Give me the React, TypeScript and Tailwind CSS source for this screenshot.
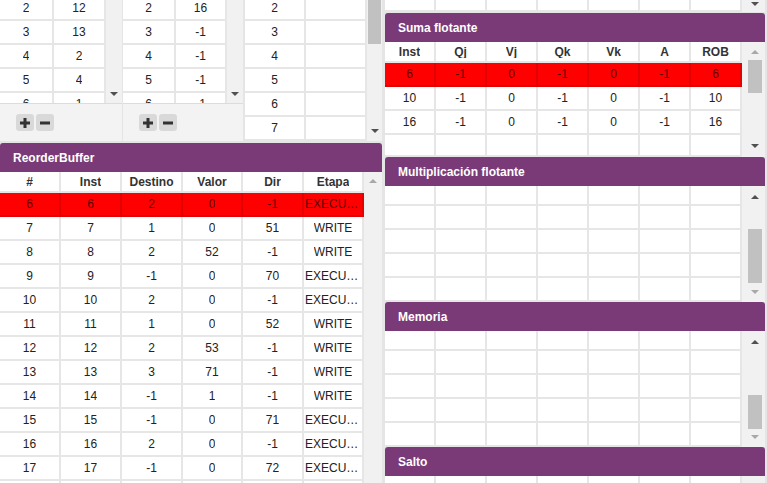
import React from "react";

type Cell = string | number;

const RW = ["w-[61px]", "w-[61px]", "w-[61px]", "w-[60px]", "w-[61px]", "w-[60px]"];
const CW = ["w-[51px]", "w-[51px]", "w-[51px]", "w-[51px]", "w-[51px]", "w-[51px]", "w-[51px]"];

function Arrow({ up, dim }: { up?: boolean; dim?: boolean }) {
  if (up)
    return (
      <div
        className={`h-0 w-0 shrink-0 border-x-[4px] border-b-[4px] border-x-transparent ${
          dim ? "border-b-[#a8a8a8]" : "border-b-[#505050]"
        }`}
      />
    );
  return (
    <div
      className={`h-0 w-0 shrink-0 border-x-[4px] border-t-[4px] border-x-transparent ${
        dim ? "border-t-[#a8a8a8]" : "border-t-[#505050]"
      }`}
    />
  );
}

function TRow({
  cells,
  widths,
  h,
  head,
  hot,
}: {
  cells: Cell[];
  widths: string[];
  h: string;
  head?: boolean;
  hot?: boolean;
}) {
  return (
    <div className={`flex shrink-0 ${h}`}>
      {widths.map((w, i) => (
        <div
          key={i}
          className={`${w} flex shrink-0 items-center justify-center overflow-hidden border-r-2 border-b-2 px-[1px] ${
            hot ? "border-[#e20000] bg-[#ff0000] text-[#5a0000]" : "border-[#e6e6e6] bg-white text-[#222]"
          } ${head ? "font-bold text-[#333]" : ""}`}
        >
          <span className="truncate">{cells[i] ?? ""}</span>
        </div>
      ))}
    </div>
  );
}

function Header({ title }: { title: string }) {
  return (
    <div className="flex h-[29px] shrink-0 items-center rounded-t-[3px] bg-[#7a3a78] pl-[13px] text-[12px] font-bold text-white">
      {title}
    </div>
  );
}

function PlusMinus() {
  return (
    <div className="flex h-[38px] shrink-0 gap-[2px] border-t border-[#dcdcdc] bg-[#f3f3f3] pl-[16px] pt-[10px]">
      <div className="flex h-[17px] w-[18px] items-center justify-center rounded-[3px] bg-[#d9d9d9]">
        <svg width="10" height="10" viewBox="0 0 10 10">
          <rect x="0" y="3.5" width="10" height="3" fill="#333" />
          <rect x="3.5" y="0" width="3" height="10" fill="#333" />
        </svg>
      </div>
      <div className="flex h-[17px] w-[18px] items-center justify-center rounded-[3px] bg-[#d9d9d9]">
        <svg width="10" height="10" viewBox="0 0 10 10">
          <rect x="0" y="3.5" width="10" height="3" fill="#333" />
        </svg>
      </div>
    </div>
  );
}

function RegPanel({ rows, widths, total }: { rows: Cell[][]; widths: string[]; total: string }) {
  return (
    <div className={`flex ${total} shrink-0 flex-col bg-[#f3f3f3]`}>
      <div className="flex h-[103px] shrink-0 overflow-hidden">
        <div className="-mt-[3px] flex flex-col">
          {rows.map((r, i) => (
            <TRow key={i} cells={r} widths={widths} h="h-[24px]" />
          ))}
        </div>
        <div className="flex w-[16px] flex-col items-center justify-end bg-[#f1f1f1] pb-[7px]">
          <Arrow />
        </div>
      </div>
      <PlusMinus />
    </div>
  );
}

const reorder: Cell[][] = [
  [6, 6, 2, 0, -1, "EXECUTE"],
  [7, 7, 1, 0, 51, "WRITE"],
  [8, 8, 2, 52, -1, "WRITE"],
  [9, 9, -1, 0, 70, "EXECUTE"],
  [10, 10, 2, 0, -1, "EXECUTE"],
  [11, 11, 1, 0, 52, "WRITE"],
  [12, 12, 2, 53, -1, "WRITE"],
  [13, 13, 3, 71, -1, "WRITE"],
  [14, 14, -1, 1, -1, "WRITE"],
  [15, 15, -1, 0, 71, "EXECUTE"],
  [16, 16, 2, 0, -1, "EXECUTE"],
  [17, 17, -1, 0, 72, "EXECUTE"],
  ["", "", "", "", "", ""],
];

const suma: Cell[][] = [
  [6, -1, 0, -1, 0, -1, 6],
  [10, -1, 0, -1, 0, -1, 10],
  [16, -1, 0, -1, 0, -1, 16],
];

function EmptyGrid() {
  return (
    <div className="flex flex-col">
      <TRow cells={[]} widths={CW} h="h-[20px]" />
      <TRow cells={[]} widths={CW} h="h-[24px]" />
      <TRow cells={[]} widths={CW} h="h-[24px]" />
      <TRow cells={[]} widths={CW} h="h-[24px]" />
      <TRow cells={[]} widths={CW} h="h-[24px]" />
    </div>
  );
}

export default function App() {
  return (
    <div className="flex h-[483px] w-[767px] overflow-hidden bg-[#e5e5e5] font-['Liberation_Sans',Arial,sans-serif] text-[12px] leading-none">
      {/* left column */}
      <div className="flex w-[382px] shrink-0 flex-col">
        <div className="flex h-[141px] shrink-0 overflow-hidden">
          <RegPanel
            total="w-[122px]"
            widths={["w-[54px]", "w-[52px]"]}
            rows={[[2, 12], [3, 13], [4, 2], [5, 4], [6, 1]]}
          />
          <div className="ml-[1px]">
            <RegPanel
              total="w-[120px]"
              widths={["w-[53px]", "w-[51px]"]}
              rows={[[2, 16], [3, -1], [4, -1], [5, -1], [6, -1]]}
            />
          </div>
          <div className="ml-[2px] flex w-[137px] shrink-0 overflow-hidden">
            <div className="-mt-[3px] flex flex-col">
              {[2, 3, 4, 5, 6, 7].map((n) => (
                <TRow key={n} cells={[n, ""]} widths={["w-[61px]", "w-[61px]"]} h="h-[24px]" />
              ))}
            </div>
            <div className="flex w-[15px] flex-col items-center bg-[#f1f1f1] pb-[8px]">
              <div className="h-[44px] w-[13px] bg-[#c1c1c1]" />
              <div className="flex-1" />
              <Arrow />
            </div>
          </div>
        </div>

        <div className="mt-[2px] flex min-h-0 flex-1 flex-col">
          <Header title="ReorderBuffer" />
          <div className="flex min-h-0 flex-1 overflow-hidden">
            <div className="flex flex-col">
              <TRow cells={["#", "Inst", "Destino", "Valor", "Dir", "Etapa"]} widths={RW} h="h-[21px]" head />
              {reorder.map((r, i) => (
                <TRow key={i} cells={r} widths={RW} h="h-[24px]" hot={i === 0} />
              ))}
            </div>
            <div className="flex w-[18px] flex-col items-center bg-[#f1f1f1] pt-[7px]">
              <Arrow up dim />
            </div>
          </div>
        </div>
      </div>

      {/* right column */}
      <div className="ml-[3px] flex w-[380px] shrink-0 flex-col">
        <div className="flex h-[12px] shrink-0 overflow-hidden">
          <TRow cells={[]} widths={CW} h="h-[12px]" />
          <div className="flex w-[23px] flex-col items-center bg-[#f1f1f1] pl-[4px] pr-[1px] pt-[2px]">
            <Arrow />
          </div>
        </div>

        <div className="mt-[1px] flex shrink-0 flex-col">
          <Header title="Suma flotante" />
          <div className="flex h-[115px] overflow-hidden">
            <div className="flex flex-col">
              <TRow cells={["Inst", "Qj", "Vj", "Qk", "Vk", "A", "ROB"]} widths={CW} h="h-[21px]" head />
              {suma.map((r, i) => (
                <TRow key={i} cells={r} widths={CW} h="h-[24px]" hot={i === 0} />
              ))}
              <TRow cells={[]} widths={CW} h="h-[22px]" />
            </div>
            <div className="flex w-[23px] flex-col items-center bg-[#f1f1f1] pl-[4px] pr-[1px] pt-[8px] pb-[9px]">
              <Arrow up dim />
              <div className="mt-[6px] h-[33px] w-[14px] shrink-0 bg-[#c1c1c1]" />
              <div className="flex-1" />
              <Arrow />
            </div>
          </div>
        </div>

        <div className="flex shrink-0 flex-col">
          <Header title="Multiplicación flotante" />
          <div className="flex h-[116px] overflow-hidden">
            <EmptyGrid />
            <div className="flex w-[23px] flex-col items-center bg-[#f1f1f1] pl-[4px] pr-[1px] pt-[9px] pb-[8px]">
              <Arrow up />
              <div className="mt-[30px] h-[54px] w-[14px] shrink-0 bg-[#c1c1c1]" />
              <div className="flex-1" />
              <Arrow dim />
            </div>
          </div>
        </div>

        <div className="flex shrink-0 flex-col">
          <Header title="Memoria" />
          <div className="flex h-[116px] overflow-hidden">
            <EmptyGrid />
            <div className="flex w-[23px] flex-col items-center bg-[#f1f1f1] pl-[4px] pr-[1px] pt-[9px] pb-[8px]">
              <Arrow up />
              <div className="mt-[51px] h-[34px] w-[14px] shrink-0 bg-[#c1c1c1]" />
              <div className="flex-1" />
              <Arrow dim />
            </div>
          </div>
        </div>

        <div className="flex min-h-0 flex-1 flex-col">
          <Header title="Salto" />
          <div className="flex min-h-0 flex-1 overflow-hidden">
            <EmptyGrid />
            <div className="w-[23px] bg-[#f1f1f1]" />
          </div>
        </div>
      </div>
    </div>
  );
}
